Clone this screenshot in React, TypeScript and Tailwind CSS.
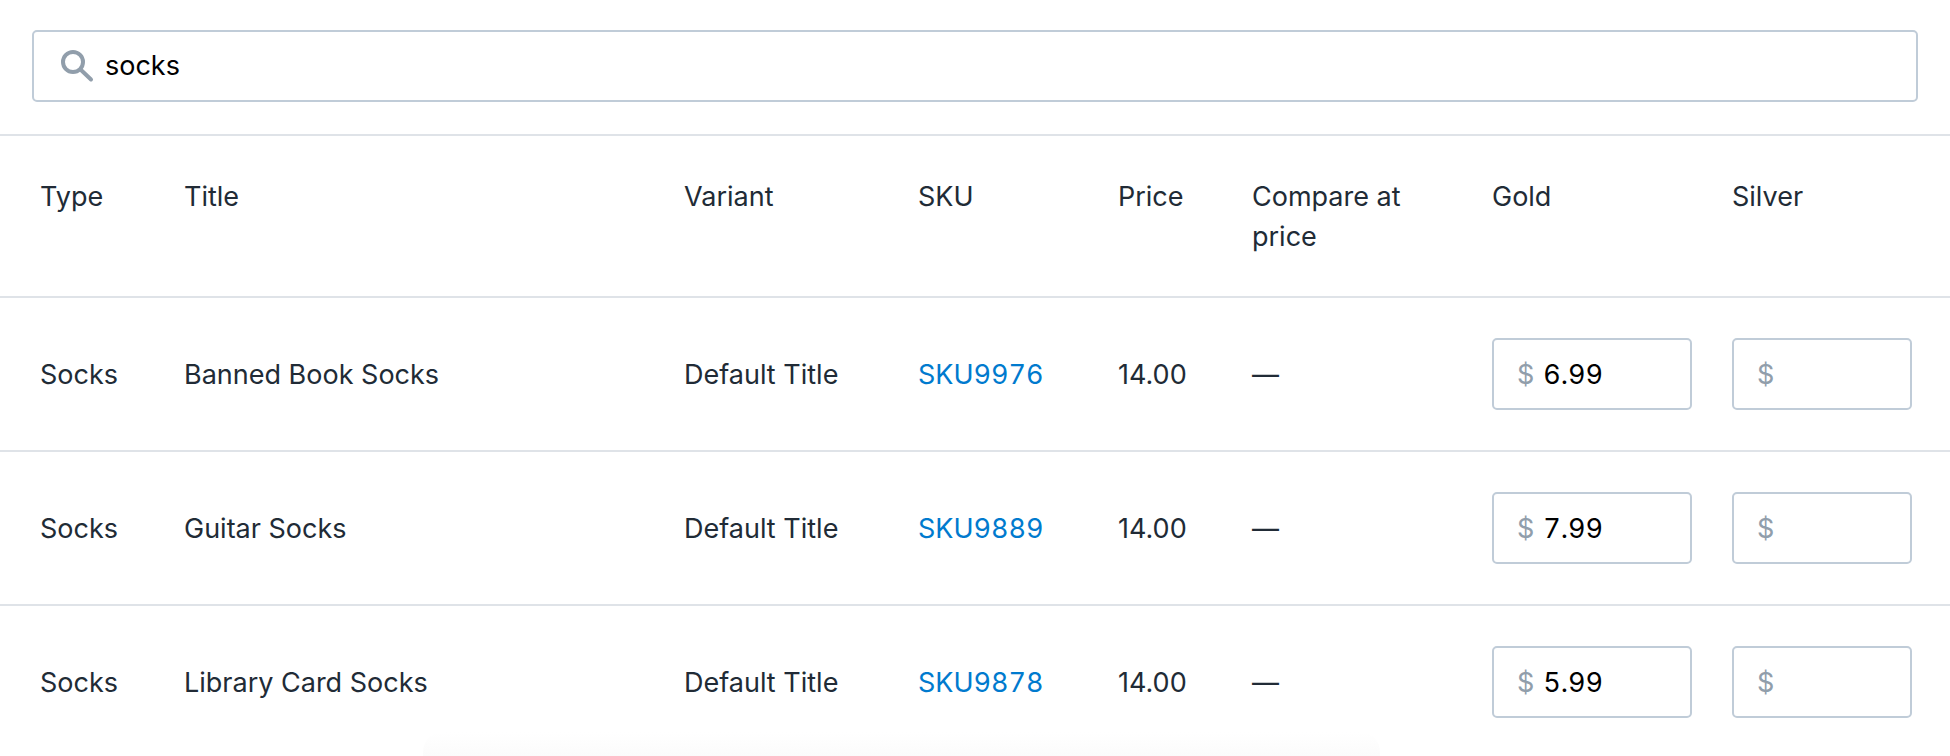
const rows = [
  { title: "Banned Book Socks", sku: "SKU9976", gold: "6.99" },
  { title: "Guitar Socks", sku: "SKU9889", gold: "7.99" },
  { title: "Library Card Socks", sku: "SKU9878", gold: "5.99" },
];

const gridCols = "grid grid-cols-[144px_500px_234px_200px_134px_240px_240px_180px] pl-[40px]";

const PriceInput = ({ value }: { value?: string }) => (
  <div className="-mt-[1px] flex h-[72px] items-center rounded-[5px] border-2 border-[#c0ccd8] pt-[2px] pl-[23px]">
    <span className="text-[#919eab]">$</span>
    <span className="ml-[9px] text-black tabular-nums">{value}</span>
  </div>
);

const SearchIcon = () => (
  <svg viewBox="0 0 34 34" fill="none" stroke="#919eab" className="h-[34px] w-[34px]">
    <circle cx="13" cy="13" r="10" strokeWidth="4" />
    <path d="M20.5 20.5 L31 30.5" strokeWidth="4" strokeLinecap="round" />
  </svg>
);

export default function App() {
  return (
    <div className="relative h-[756px] overflow-hidden bg-white font-['Inter',sans-serif] text-[27px] leading-[40px] text-[#212b36]">
      <div className="border-b-2 border-[#dfe3e8] px-[32px] pt-[30px] pb-[32px]">
        <div className="flex h-[72px] items-center rounded-[5px] border-2 border-[#c0ccd8] pl-[26px]">
          <SearchIcon />
          <span className="ml-[11px] text-black">socks</span>
        </div>
      </div>

      <div className={`${gridCols} h-[162px] items-start border-b-2 border-[#dfe3e8] pt-[41px]`}>
        <div>Type</div>
        <div>Title</div>
        <div>Variant</div>
        <div>SKU</div>
        <div>Price</div>
        <div className="w-[170px]">Compare at price</div>
        <div>Gold</div>
        <div>Silver</div>
      </div>

      {rows.map((row) => (
        <div key={row.sku} className={`${gridCols} h-[154px] items-center border-b-2 border-[#dfe3e8] last:border-b-0`}>
          <div className="mt-[2px]">Socks</div>
          <div className="mt-[2px]">{row.title}</div>
          <div className="mt-[2px]">Default Title</div>
          <div className="mt-[2px] text-[#007ace] tabular-nums">{row.sku}</div>
          <div className="mt-[2px]">14.00</div>
          <div className="mt-[2px]">—</div>
          <div className="w-[200px]">
            <PriceInput value={row.gold} />
          </div>
          <div>
            <PriceInput />
          </div>
        </div>
      ))}

      {/* faint shadow of whatever sits below the crop */}
      <div className="absolute bottom-0 left-[423px] h-[24px] w-[957px] rounded-t-[20px] bg-gradient-to-b from-white to-[#fbfbfb]" />
    </div>
  );
}
